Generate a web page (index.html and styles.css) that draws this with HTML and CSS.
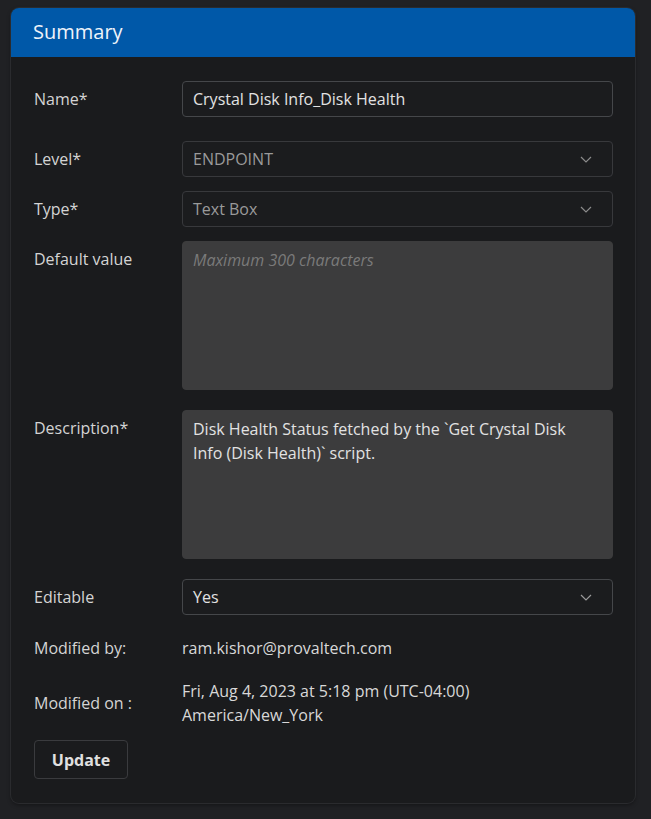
FILE: index.html
```html
<!DOCTYPE html>
<html>
<head>
<meta charset="utf-8">
<link rel="stylesheet" href="styles.css">
</head>
<body>
<div class="card">
  <div class="card-header">Summary</div>
  <div class="card-body">
    <div class="row row-name">
      <div class="label">Name*</div>
      <div class="field input">Crystal Disk Info_Disk Health</div>
    </div>
    <div class="row row-level">
      <div class="label">Level*</div>
      <div class="field select disabled"><span>ENDPOINT</span><svg class="chev" width="12" height="7" viewBox="0 0 12 7"><path d="M1 1 L6 6 L11 1" fill="none" stroke="#8a8a8a" stroke-width="1.2"/></svg></div>
    </div>
    <div class="row row-type">
      <div class="label">Type*</div>
      <div class="field select disabled"><span>Text Box</span><svg class="chev" width="12" height="7" viewBox="0 0 12 7"><path d="M1 1 L6 6 L11 1" fill="none" stroke="#8a8a8a" stroke-width="1.2"/></svg></div>
    </div>
    <div class="row row-default">
      <div class="label">Default value</div>
      <div class="field area placeholder">Maximum 300 characters</div>
    </div>
    <div class="row row-desc">
      <div class="label">Description*</div>
      <div class="field area">Disk Health Status fetched by the `Get Crystal Disk<br>Info (Disk Health)` script.</div>
    </div>
    <div class="row row-edit">
      <div class="label">Editable</div>
      <div class="field select"><span>Yes</span><svg class="chev" width="12" height="7" viewBox="0 0 12 7"><path d="M1 1 L6 6 L11 1" fill="none" stroke="#9a9a9a" stroke-width="1.2"/></svg></div>
    </div>
    <div class="row row-by">
      <div class="label">Modified by:</div>
      <div class="value">ram.kishor@provaltech.com</div>
    </div>
    <div class="row row-on">
      <div class="label">Modified on :</div>
      <div class="value">Fri, Aug 4, 2023 at 5:18 pm (UTC-04:00)<br>America/New_York</div>
    </div>
    <button class="btn">Update</button>
  </div>
</div>
</body>
</html>
```
FILE: styles.css
```css
html, body {
  margin: 0;
  padding: 0;
  background: #202124;
}
body {
  padding: 8px 16px 16px 11px;
  font-family: "Open Sans", "Noto Sans", sans-serif;
  color: #d6d6d6;
  font-size: 16px;
}
.card {
  width: 624px;
  border-radius: 8px;
  background: #1a1b1d;
  box-shadow: 0 0 0 1px #2a2b2e, 0 2px 4px rgba(0,0,0,0.4);
  overflow: hidden;
}
.card-header {
  background: #0058a8;
  height: 49px;
  box-sizing: border-box;
  padding: 11px 0 0 22px;
  font-size: 20px;
  color: #eef3fa;
  line-height: 26px;
}
.card-body {
  padding: 24px 22px 24px 23px;
  display: flex;
  flex-direction: column;
}
.row {
  display: flex;
  align-items: flex-start;
}
.label {
  width: 148px;
  flex: none;
  font-size: 16px;
  line-height: 24px;
  color: #d4d4d4;
}
.field {
  flex: 1;
  box-sizing: border-box;
  border: 1px solid #45474a;
  border-radius: 4px;
  background: #1b1c1e;
  padding: 0 10px;
  font-size: 16px;
  color: #e2e2e2;
}
.input, .select {
  height: 36px;
  line-height: 34px;
}
.row-name .label, .row-level .label, .row-type .label, .row-edit .label {
  padding-top: 6px;
}
.select {
  display: flex;
  align-items: center;
  justify-content: space-between;
  padding-right: 20px;
}
.select.disabled {
  color: #9a9a9a;
  border-color: #38393c;
}
.chev { display: block; }
.row-level { margin-top: 24px; }
.row-type { margin-top: 14px; }
.row-default { margin-top: 14px; }
.row-desc { margin-top: 20px; }
.row-edit { margin-top: 20px; }
.area {
  height: 149px;
  background: #3c3c3d;
  border-color: #3c3c3d;
  padding-top: 6px;
  line-height: 24px;
}
.placeholder {
  font-style: italic;
  color: #7a7a7a;
}
.row-default .label, .row-desc .label { padding-top: 6px; }
.row-by { margin-top: 21px; }
.value { font-size: 16px; line-height: 24px; color: #d8d8d8; }
.row-on { margin-top: 19px; align-items: center; }
.btn {
  align-self: flex-start;
  margin-top: 13px;
  background: #1a1b1d;
  border: 1px solid #3a3b3e;
  border-radius: 4px;
  color: #e0e0e0;
  font-family: "Open Sans", "Noto Sans", sans-serif;
  font-weight: 700;
  font-size: 16px;
  height: 39px;
  width: 94px;
  padding: 0;
}
```
